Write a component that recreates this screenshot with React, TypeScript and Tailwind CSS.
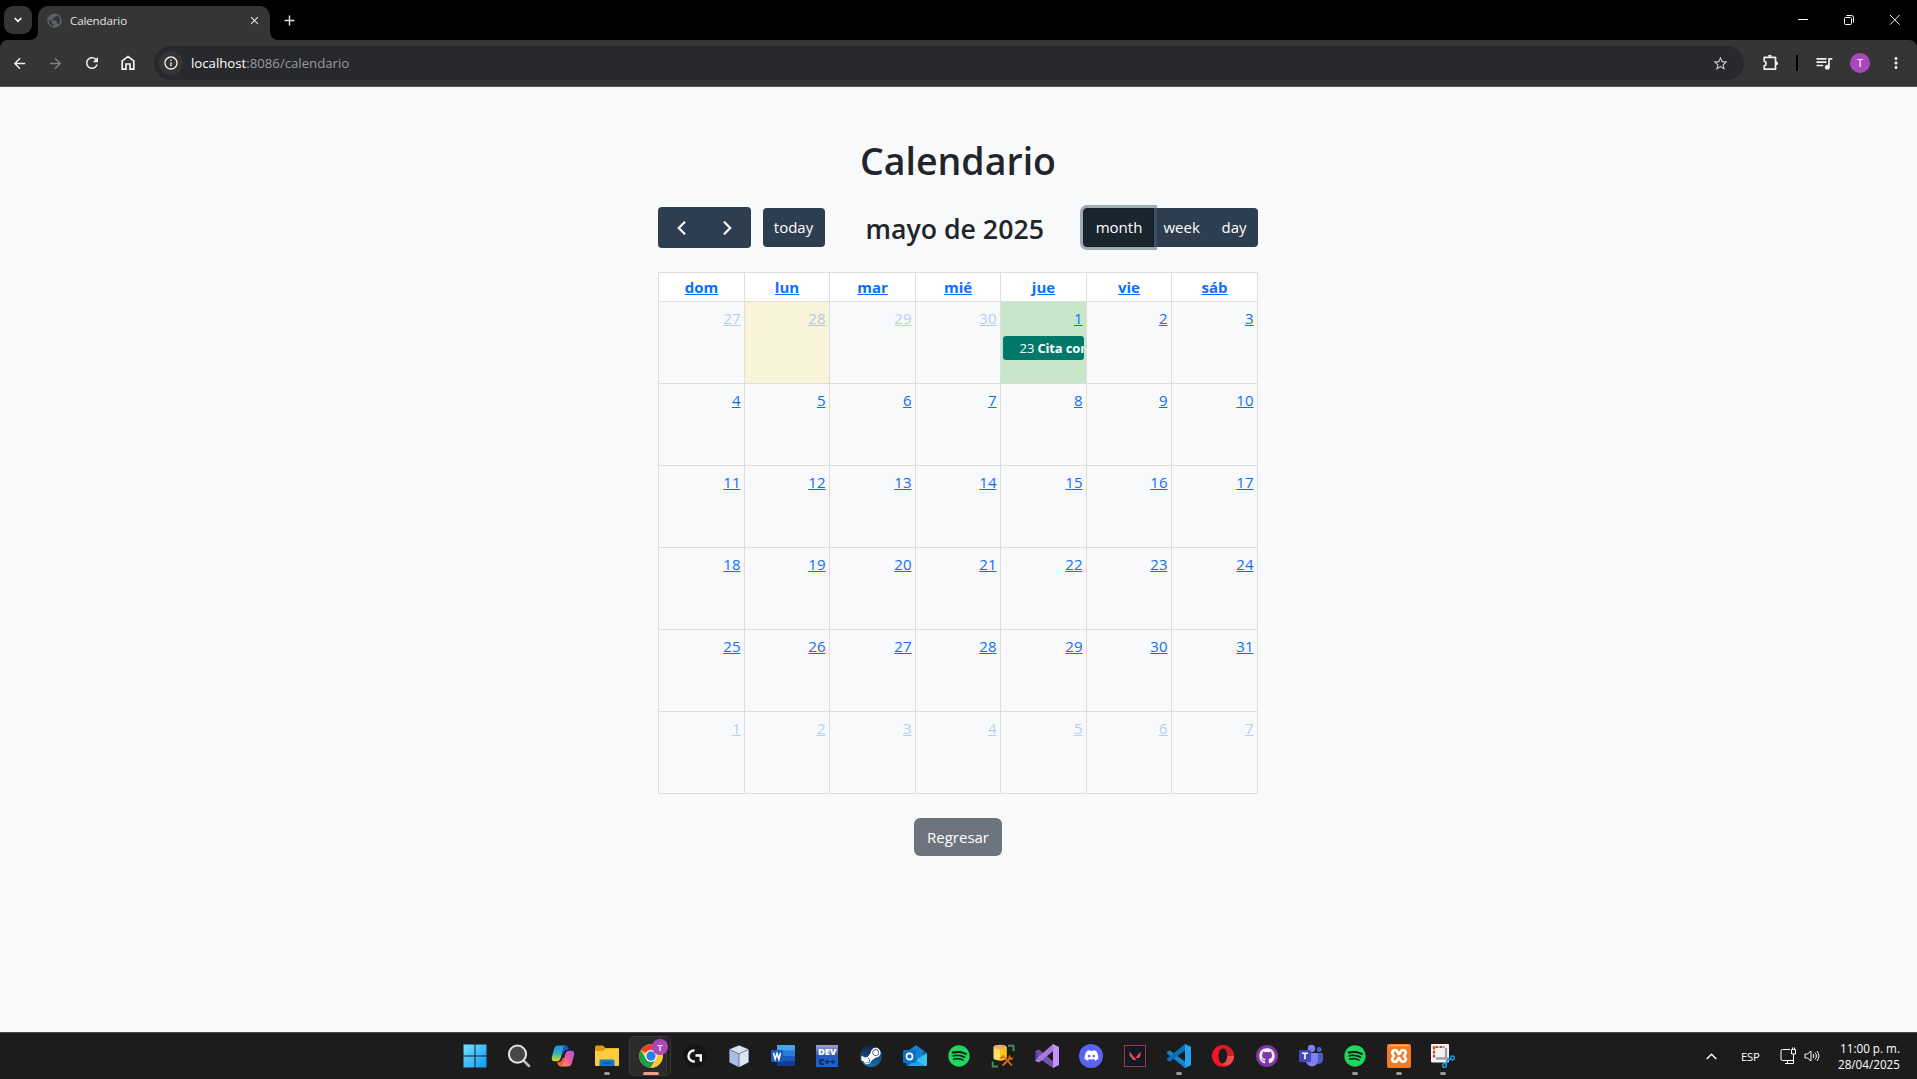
import React from "react";
import { FaSpotify, FaDiscord, FaGithub, FaSteamSymbol } from "react-icons/fa";
import {
  MdArrowBack,
  MdArrowForward,
  MdRefresh,
  MdOutlineInfo,
  MdStarOutline,
  MdQueueMusic,
  MdMoreVert,
  MdPublic,
  MdClose,
  MdAdd,
} from "react-icons/md";

function TabBar() {
  return (
    <div className="flex h-10 items-start bg-black text-[#e3e3e3]">
      <div className="ml-1 mt-1.5 flex h-7 w-7 items-center justify-center rounded-[9px] bg-[#353535]">
        <svg width="8" height="6" viewBox="0 0 8 6" fill="none" stroke="#fff" strokeWidth="1.7">
          <path d="M.7 1 4 4.3 7.3 1" />
        </svg>
      </div>
      <div className="relative ml-1.5 mt-1.5 flex h-[34px] w-[232px] items-center rounded-t-[10px] bg-[#353535]">
        <svg className="absolute -left-2 bottom-0" width="8" height="8" viewBox="0 0 8 8" fill="#353535">
          <path d="M8 0v8H0a8 8 0 0 0 8-8z" />
        </svg>
        <svg className="absolute -right-2 bottom-0" width="8" height="8" viewBox="0 0 8 8" fill="#353535">
          <path d="M0 0v8h8a8 8 0 0 1-8-8z" />
        </svg>
        <MdPublic className="mb-[6px] ml-2 shrink-0 text-[#5f6368]" size={17} />
        <span className="mb-[5px] ml-[7px] text-[11.6px] font-medium leading-4 tracking-[-0.15px] text-[#e3e3e3]">
          Calendario
        </span>
        <MdClose className="mb-1.5 ml-auto mr-[9px]" size={13} />
      </div>
      <MdAdd className="ml-[11px] mt-3" size={17} />
      <div className="ml-auto mr-[17px] mt-[14px] flex items-center text-white">
        <svg width="102" height="13" viewBox="0 0 102 13" fill="none" stroke="currentColor">
          <path d="M0 5.500h10" />
          <rect x="46.500" y="3.500" width="7" height="7" rx="1" />
          <path d="M48.500 1.500h5a2 2 0 0 1 2 2v5" />
          <path d="M92 1l9.600 9.600M101.600 1 92 10.600" />
        </svg>
      </div>
    </div>
  );
}

function AddressBar() {
  return (
    <div className="bg-black">
      <div className="flex h-[47px] items-center rounded-t-lg border-b border-[#5a5a5a] bg-[#353535] text-[#f0f0f0]">
        <MdArrowBack className="ml-[11px]" size={17} />
        <MdArrowForward className="ml-[19px] text-[#808080]" size={17} />
        <MdRefresh className="ml-[19px]" size={18} />
        <svg className="ml-5" width="14" height="16" viewBox="0 0 14 16" fill="none" stroke="currentColor" strokeWidth="1.700">
          <path d="M1.200 5.900 7 1.500l5.800 4.400v8.300H9V9H5v5.200H1.200z" />
        </svg>
        <div className="ml-[19px] flex h-[34px] w-[1590px] items-center rounded-full bg-[#28292c]">
          <div className="ml-[5px] flex h-6 w-6 items-center justify-center rounded-full bg-[#353535]">
            <MdOutlineInfo size={16} />
          </div>
          <span className="ml-2 text-[13.200px] leading-5 text-[#9a9b9d]">
            <span className="text-white">localhost</span>:8086/calendario
          </span>
          <MdStarOutline className="ml-auto mr-[15px] text-[#c4c4c4]" size={17} />
        </div>
        <svg className="ml-[18px]" width="18" height="18" viewBox="0 0 18 18" fill="none">
          <path
            d="M2.200 3.300h11.300v11.900H2.200v-3.400a2.400 2.400 0 0 0 0-4.700z"
            stroke="currentColor"
            strokeWidth="1.700"
            strokeLinejoin="round"
          />
          <path d="M5.800 2.800a2 2 0 0 1 4 0zM14 7.200a2 2 0 0 1 0 4z" fill="currentColor" />
        </svg>
        <div className="ml-[16px] h-4 w-0.5 bg-black" />
        <MdQueueMusic className="ml-[16px]" size={20} />
        <div className="ml-4 flex h-5 w-5 items-center justify-center rounded-full bg-[#ab47bc] text-[10px] font-semibold text-[#f3dff6]">
          T
        </div>
        <MdMoreVert className="ml-[17px]" size={18} />
      </div>
    </div>
  );
}

const weekdays = ["dom", "lun", "mar", "mié", "jue", "vie", "sáb"];
const weeks = [
  [27, 28, 29, 30, 1, 2, 3],
  [4, 5, 6, 7, 8, 9, 10],
  [11, 12, 13, 14, 15, 16, 17],
  [18, 19, 20, 21, 22, 23, 24],
  [25, 26, 27, 28, 29, 30, 31],
  [1, 2, 3, 4, 5, 6, 7],
];
const columns = "grid grid-cols-[86px_85px_86px_85px_86px_85px_86px]";

function Toolbar() {
  return (
    <div className="flex h-[41px] items-center text-[15px] text-white">
      <div className="flex h-[41px] w-[93px] items-center justify-between rounded-[4px] bg-[#2c3e50] px-[19px]">
        <svg width="9" height="14" viewBox="0 0 9 14" fill="none" stroke="#fff" strokeWidth="2.200">
          <path d="M8 .8 1.800 7 8 13.200" />
        </svg>
        <svg width="9" height="14" viewBox="0 0 9 14" fill="none" stroke="#fff" strokeWidth="2.200">
          <path d="M1 .8 7.200 7 1 13.200" />
        </svg>
      </div>
      <div className="ml-3 flex h-[39px] w-[62px] items-center justify-center rounded-[4px] bg-[#2c3e50]">today</div>
      <h2 className="ml-[41px] mt-0.5 w-[178px] whitespace-nowrap text-[26.700px] font-semibold leading-[34px] text-[#212529]">
        mayo de 2025
      </h2>
      <div className="ml-auto flex h-[39px]">
        <div className="z-10 flex w-[71px] items-center justify-center rounded-l-[4px] border border-[#151e27] bg-[#1a252f] pl-0.5 shadow-[0_0_0_3px_rgba(76,91,106,0.5)]">
          month
        </div>
        <div className="relative z-20 -ml-px flex w-[105px] items-center rounded-r-[4px] border-l border-[#151e27]">
          <div className="flex h-full flex-1 items-center rounded-r-[4px] border-l-[3px] border-[#3d4f60] bg-[#2c3e50] pl-[7px]">
            <span>week</span>
            <span className="ml-auto mr-[11px]">day</span>
          </div>
        </div>
      </div>
    </div>
  );
}

function Calendar() {
  return (
    <div className="mt-6 w-[600px] border-l border-t border-[#dcdee0]">
      <div className={columns}>
        {weekdays.map((day) => (
          <div
            key={day}
            className="h-[29px] border-b border-r border-[#dcdee0] bg-white pl-px pt-0.5 text-center text-[15px] font-bold leading-6 text-[#0d6efd] underline"
          >
            {day}
          </div>
        ))}
      </div>
      {weeks.map((week, w) => (
        <div key={w} className={columns}>
          {week.map((day, d) => {
            const outside = (w === 0 && d < 4) || w === 5;
            const today = w === 0 && d === 1;
            const busy = w === 0 && d === 4;
            return (
              <div
                key={d}
                className={
                  "h-[82px] border-b border-r border-[#dcdee0] " +
                  (today ? "bg-[#f9f3da]" : busy ? "bg-[#c8e6c9]" : "")
                }
              >
                <div
                  className={
                    "pl-1 pr-[3px] pt-1 text-right text-[15px] leading-6 text-[#0d6efd] underline " +
                    (outside ? "opacity-30" : "")
                  }
                >
                  {day}
                </div>
                {busy && (
                  <div className="ml-0.5 mr-0.5 mt-1.5 flex h-6 items-center overflow-hidden whitespace-nowrap rounded-[3px] bg-[#00796b] pl-[17px] pt-0.5 text-[13px] text-white">
                    <span>23</span>
                    <span className="ml-[3px] font-bold tracking-[-0.15px]">Cita con</span>
                  </div>
                )}
              </div>
            );
          })}
        </div>
      ))}
    </div>
  );
}

function Svg({ children, size = 24 }: { children: React.ReactNode; size?: number }) {
  return (
    <svg width={size} height={size} viewBox="0 0 24 24" fill="none">
      {children}
    </svg>
  );
}

function SpotifyIcon() {
  return (
    <div className="flex h-[22px] w-[22px] items-center justify-center rounded-full bg-[#0f1a12]">
      <FaSpotify size={22} color="#1ed760" />
    </div>
  );
}

const icons: { name: string; open?: boolean; node: React.ReactNode }[] = [
  {
    name: "start",
    node: (
      <Svg>
        <defs>
          <linearGradient id="win" x1="0" y1="0" x2="1" y2="1" gradientUnits="objectBoundingBox">
            <stop stopColor="#6fe4ff" />
            <stop offset="1" stopColor="#1296f5" />
          </linearGradient>
        </defs>
        <path d="M.5 .5h11v11H.5zM12.500 .5h11v11h-11zM.5 12.500h11v11H.5zM12.500 12.500h11v11h-11z" fill="url(#win)" />
      </Svg>
    ),
  },
  {
    name: "search",
    node: (
      <Svg>
        <path d="M16.500 16.500 22 22" stroke="#b9b9b9" strokeWidth="2.600" strokeLinecap="round" />
        <circle cx="10.500" cy="10.200" r="8.600" fill="#474747" stroke="#e4e4e4" strokeWidth="2" />
      </Svg>
    ),
  },
  {
    name: "copilot",
    node: (
      <Svg>
        <defs>
          <linearGradient id="copL" x1="0" y1="0" x2="0" y2="1">
            <stop stopColor="#1f8df0" />
            <stop offset=".5" stopColor="#2fb6b0" />
            <stop offset="1" stopColor="#e8d61c" />
          </linearGradient>
          <linearGradient id="copR" x1="1" y1="0" x2="0" y2="1">
            <stop stopColor="#a050f0" />
            <stop offset=".5" stopColor="#ee5896" />
            <stop offset="1" stopColor="#ffa04c" />
          </linearGradient>
        </defs>
        <path d="M7 1.500h8c-1.500 0-2.200 1.500-2.700 3.200L9.800 14c-.9 2.500-2 3.300-4 3.300H4C1 17.300.3 15.500 1 12.500l2-7C3.700 2.800 5 1.500 7 1.500z" fill="url(#copL)" />
        <path d="M12 1.500h2.500c1.500 0 2.300 1 2.800 2.500l.5 1.800c-3 0-4.200.7-5 3L12 10.500l-1.200-1 1.400-4.800c.4-1.400 1-2.200 1.800-2.700z" fill="#1852c4" />
        <path d="M17 22.500H9c1.500 0 2.200-1.500 2.700-3.200L14.200 10c.9-2.500 2-3.300 4-3.300H20c3 0 3.700 1.800 3 4.800l-2 7c-.7 2.700-2 4-4 4z" fill="url(#copR)" />
        <path d="M12 22.500H9.500c-1.500 0-2.300-1-2.800-2.500l-.5-1.800c3 0 4.200-.7 5-3l.8-1.700 1.200 1-1.400 4.800c-.4 1.400-1 2.200-1.800 2.700z" fill="#f0663c" />
      </Svg>
    ),
  },
  {
    name: "explorer",
    open: true,
    node: (
      <Svg>
        <path d="M0 3a1.500 1.500 0 0 1 1.500-1.500H8l2.500 2.500H23a1 1 0 0 1 1 1v5H0z" fill="#dc9a10" />
        <path d="M0 7h8l2.500-2.500H23a1 1 0 0 1 1 1V21a1 1 0 0 1-1 1H1a1 1 0 0 1-1-1z" fill="#fdcb3e" />
        <path d="M4.500 22v-5a1.500 1.500 0 0 1 1.500-1.500h12a1.500 1.500 0 0 1 1.500 1.500v5z" fill="#1377cf" />
        <path d="M8 19h8" stroke="#0b4f94" strokeWidth="1.300" />
      </Svg>
    ),
  },
  {
    name: "chrome",
    node: (
      <Svg>
        <circle cx="12" cy="12" r="11.800" fill="#fcc934" />
        <path d="M12 12 1.800 6.100A11.800 11.800 0 0 1 22.200 6.100z" fill="#ea4335" />
        <path d="M1.800 6.100a11.800 11.800 0 0 0 9.700 17.700L17.100 15 12 12 6.900 15z" fill="#1e9e4b" />
        <path d="M12 6.500h10.400A11.800 11.800 0 0 1 11.500 23.800L17 15z" fill="#fcc934" />
        <circle cx="12" cy="12" r="5.900" fill="#fff" />
        <circle cx="12" cy="12" r="4.700" fill="#2b7de9" />
      </Svg>
    ),
  },
  {
    name: "ghub",
    node: (
      <Svg>
        <circle cx="12" cy="12" r="11.700" fill="#151515" />
        <path d="M11.500 6.500h-.5a5.500 5.500 0 0 0 0 11h.8" stroke="#fff" strokeWidth="2.400" />
        <path d="M12.500 11.500h5.300v6" stroke="#fff" strokeWidth="2.400" />
      </Svg>
    ),
  },
  {
    name: "virtualbox",
    node: (
      <Svg>
        <path d="M12 .8 22 5v13.500L12 23.500 2 18.500V5z" fill="#36387c" />
        <path d="M12 1.500 21.300 5.300 12 9.500 2.700 5.300z" fill="#d3e6e6" />
        <path d="M2.500 5.800 11.700 10v13L2.500 18.200z" fill="#a9bfe2" />
        <path d="M21.500 5.800 12.300 10v13l9.200-4.800z" fill="#dde5f0" />
      </Svg>
    ),
  },
  {
    name: "word",
    node: (
      <Svg>
        <path d="M6 1h17a1 1 0 0 1 1 1v5H6z" fill="#41a5ee" />
        <path d="M6 6.500h18V12H6z" fill="#2b7cd3" />
        <path d="M6 12h18v5.500H6z" fill="#185abd" />
        <path d="M6 17.500h18V21a1 1 0 0 1-1 1H6z" fill="#103f91" />
        <rect y="6" width="12" height="12" rx="1" fill="#185abd" />
        <path d="m2.500 8.800 1.600 6.500L6 9.500l1.900 5.800 1.600-6.500" stroke="#fff" strokeWidth="1.500" />
      </Svg>
    ),
  },
  {
    name: "devcpp",
    node: (
      <div className="flex h-[22px] w-[22px] flex-col items-center overflow-hidden bg-linear-to-b from-[#a49fc4] via-[#2458b8] to-[#1268dc] text-[9.500px] font-extrabold leading-[11px]">
        <span className="h-[11px] pt-px tracking-[-0.300px] text-white">DEV</span>
        <span className="h-[11px] tracking-[-0.200px] text-[#0b2460]">C++</span>
      </div>
    ),
  },
  {
    name: "steam",
    node: (
      <div className="flex h-[22px] w-[22px] items-center justify-center overflow-hidden rounded-full bg-linear-to-b from-[#111d42] to-[#1475ad]">
        <FaSteamSymbol size={22} color="#fff" />
      </div>
    ),
  },
  {
    name: "outlook",
    node: (
      <Svg>
        <path d="M3 8.500 13 1l10.500 7.500V21a1 1 0 0 1-1 1H4a1 1 0 0 1-1-1z" fill="#0f62ae" />
        <path d="M6 6.500 13 1.500l7 5V15H6z" fill="#1681d0" />
        <path d="m24 9-9.500 6L10 22h13a1 1 0 0 0 1-1z" fill="#32c4f2" />
        <path d="M5 22h17L12 15z" fill="#1ba7e5" />
        <rect y="6" width="13" height="13" rx="1" fill="#0f6fc6" />
        <ellipse cx="6.500" cy="12.500" rx="3" ry="3.200" stroke="#fff" strokeWidth="1.700" />
      </Svg>
    ),
  },
  { name: "spotify", node: <SpotifyIcon /> },
  {
    name: "ssms",
    node: (
      <Svg>
        <path d="M17 1.700h5.500V7M1.700 17.500v5H7" stroke="#3f9445" strokeWidth="2" />
        <path d="M2.500 3v11c0 1.500 3 2.500 6.500 2.500s6.500-1 6.500-2.500V3z" fill="#fde062" />
        <path d="M9 3h6.500v11c0 1.500-3 2.500-6.500 2.500z" fill="#fcc90f" />
        <ellipse cx="9" cy="3" rx="6.500" ry="2.300" fill="#f4aa6f" />
        <path d="m12.500 12.500 8.500 9M20 13.500l-8.500 8" stroke="#df6a12" strokeWidth="1.800" />
        <path d="M9.500 14.500 13 11.300M18.500 11.500v3.200h3.500" stroke="#df6a12" strokeWidth="1.800" />
      </Svg>
    ),
  },
  {
    name: "visual-studio",
    node: (
      <Svg>
        <path d="M0 7.300 4 5.500l14 11.700V24L4.500 14.800 2.300 16.500V18L0 16.700z" fill="#7450b3" />
        <path d="M0 16.700V16L18 0v7.200L4 18.500z" fill="#a77ae0" />
        <path d="M0 7.300v9.400L2.300 15V9z" fill="#54358c" />
        <path d="m18 0 6 3v18l-6 3z" fill="#c792f5" />
      </Svg>
    ),
  },
  {
    name: "discord",
    node: (
      <div className="flex h-6 w-6 items-center justify-center rounded-full bg-[#5865f2]">
        <FaDiscord size={15} color="#fff" />
      </div>
    ),
  },
  {
    name: "valorant",
    node: (
      <Svg>
        <rect x="1.500" y="1.500" width="21" height="21" fill="#111a24" stroke="#9c3942" />
        <path d="m6.500 7.500 7 8.500h-3.400l-3.600-4.500zM17.500 7.500V12l-1.800 2h-3.200z" fill="#f4434f" />
      </Svg>
    ),
  },
  {
    name: "vscode",
    open: true,
    node: (
      <Svg>
        <path d="M0 8.300 2.500 6.200 18 17.500V24L0 9.500z" fill="#1684cb" />
        <path d="M0 15.700 2.500 17.800 18 6.500V0L0 14.500z" fill="#0b70b5" />
        <path d="m18 0 6 2.800v18.400L18 24z" fill="#27a3ee" />
      </Svg>
    ),
  },
  {
    name: "opera",
    node: (
      <Svg>
        <path d="M12 1a11 11 0 1 0 0 22 11 11 0 0 0 0-22zm0 3.200c2.800 0 4.500 3.500 4.500 7.800s-1.700 7.800-4.500 7.800S7.500 16.300 7.500 12 9.200 4.200 12 4.200z" fill="#f5122b" fillRule="evenodd" />
        <path d="M9 4.800A11 11 0 0 1 19.400 3.900 11 11 0 0 1 19.400 20.100 11 11 0 0 1 9 19.200c1 .6 2 .8 3 .6 2.800 0 4.500-3.500 4.500-7.800S14.800 4.200 12 4.200c-1 0-2 .2-3 .6z" fill="#c7202a" />
        <path d="M16.500 12H23a11 11 0 0 1-3.600 8.100A11 11 0 0 1 9 19.200c4.500 2 7-3 7.500-7.200z" fill="#f24a4b" />
      </Svg>
    ),
  },
  {
    name: "github",
    node: (
      <div className="flex h-[22px] w-[22px] items-center justify-center rounded-full bg-[#8235a5]">
        <FaGithub size={16} color="#f5f0f8" />
      </div>
    ),
  },
  {
    name: "teams",
    node: (
      <Svg>
        <circle cx="12.500" cy="4.500" r="3.700" fill="#7b83eb" />
        <circle cx="20.200" cy="5.500" r="2.500" fill="#5059c9" />
        <path d="M16 9h7a1 1 0 0 1 1 1v6a4 4 0 0 1-7 2.500z" fill="#5059c9" />
        <path d="M7 9h11a1 1 0 0 1 1 1v6.500a6 6 0 0 1-12 0z" fill="#7b83eb" />
        <rect y="6" width="12" height="12" rx="1" fill="#4149b8" />
        <path d="M3 9.300h6M6 9.300v6" stroke="#fff" strokeWidth="1.600" />
      </Svg>
    ),
  },
  { name: "spotify-running", open: true, node: <SpotifyIcon /> },
  {
    name: "xampp",
    open: true,
    node: (
      <Svg>
        <rect width="24" height="24" rx="2" fill="#ee7c28" />
        <path d="M2.500 1.500h19" stroke="#f8b078" strokeWidth="1.500" />
        <path
          d="M8 6.200c-2.500 0-3.500 2.300-2.300 4L7 12l-1.300 1.800c-1.200 1.700-.2 4 2.300 4 3.500 0 2-4 4-4s.5 4 4 4c2.500 0 3.500-2.300 2.300-4L17 12l1.300-1.800c1.200-1.700.2-4-2.300-4-3.500 0-2 4-4 4s-.5-4-4-4z"
          stroke="#fff"
          strokeWidth="2.700"
          strokeLinejoin="round"
        />
      </Svg>
    ),
  },
  {
    name: "snipping-tool",
    open: true,
    node: (
      <Svg>
        <rect x="0" y="0" width="18" height="18.500" rx="1" fill="#f2f2f2" />
        <path d="M3 13.500V3h10.500" stroke="#d34115" strokeWidth="2.200" strokeDasharray="2.800 1.200" />
        <path d="M15 4v11.500M5 14.500h13" stroke="#9ca1a6" strokeWidth="2.300" />
        <circle cx="21.500" cy="14" r="1.900" stroke="#1e98e0" strokeWidth="1.500" />
        <circle cx="13.500" cy="21.500" r="1.900" stroke="#1e98e0" strokeWidth="1.500" />
        <path d="m15 20 2-5M20 15l-5 2" stroke="#1e98e0" strokeWidth="1.500" />
      </Svg>
    ),
  },
];

function Taskbar() {
  return (
    <div className="flex h-[47px] border-t border-[#484848] bg-[#1c1c1c] text-white">
      <div className="ml-[453px] flex">
        {icons.map((icon) => (
          <div key={icon.name} className="relative flex h-full w-11 items-center justify-center pb-px">
            {icon.name === "chrome" && (
              <>
                <div className="absolute left-[5px] top-[3px] h-10 w-[37px] rounded-[5px] border border-[#383838] bg-[#222]" />
                <div className="absolute left-0 top-[3px] h-10 w-[38px] rounded-[5px] border border-[#383838] bg-[#2b2b2b]" />
              </>
            )}
            <div className="relative">{icon.node}</div>
            {icon.name === "chrome" && (
              <>
                <div className="absolute left-[23px] top-[6px] flex h-4 w-4 items-center justify-center rounded-full bg-[#ab47bc] text-[9px] font-semibold leading-none">
                  T
                </div>
                <div className="absolute bottom-1 left-3.5 h-[3px] w-4 rounded-full bg-[#ec9c90]" />
              </>
            )}
            {icon.open && <div className="absolute bottom-1 left-[19px] h-[3px] w-1.5 rounded-full bg-[#9a9a9a]" />}
          </div>
        ))}
      </div>
      <div className="ml-auto flex items-center pr-[17px]">
        <svg width="11" height="7" viewBox="0 0 11 7" fill="none" stroke="#fff" strokeWidth="1.400">
          <path d="M.7 6 5.500 1.200 10.300 6" />
        </svg>
        <span className="ml-6 mt-0.5 w-5 text-[11.300px] tracking-[-0.200px]">ESP</span>
        <svg className="ml-[19px]" width="17" height="18" viewBox="0 0 17 18" fill="none" stroke="#fff">
          <path d="M10 2.500H2.500a1.500 1.500 0 0 0-1.500 1.500v8a1.500 1.500 0 0 0 1.500 1.500H13M5 16.500h8M7.500 13.500v3" />
          <path d="M11.500 2.500h4v4.500h-4zM12.500 2.500v-2M14.500 2.500v-2M13.500 7v9.500" />
        </svg>
        <svg className="ml-[7px]" width="17" height="14" viewBox="0 0 17 14" fill="none" stroke="#fff">
          <path d="M1 5v4h2.500l3.500 3V2L3.500 5z" />
          <path d="M9 5a3 3 0 0 1 0 4M11 3.500a5 5 0 0 1 0 7M13 2a7.500 7.500 0 0 1 0 10" />
        </svg>
        <div className="ml-[13px] flex w-[66px] flex-col items-end whitespace-nowrap text-[11.700px] leading-4">
          <div>11:00 p. m.</div>
          <div>28/04/2025</div>
        </div>
      </div>
    </div>
  );
}

export default function App() {
  return (
    <div className="flex h-[1079px] w-[1917px] flex-col overflow-hidden bg-[#f8f9fb] font-['Open_Sans','Noto_Sans',sans-serif]">
      <TabBar />
      <AddressBar />
      <main className="flex flex-1 flex-col items-center pr-0.5">
        <h1 className="mt-[50px] pl-px text-[37.500px] font-semibold leading-12 text-[#212529]">Calendario</h1>
        <div className="mt-[22px] w-[600px]">
          <Toolbar />
          <Calendar />
        </div>
        <div className="mt-6 flex h-[38px] w-[88px] items-center justify-center rounded-md bg-[#6c757d] pl-px text-[15px] text-white">
          Regresar
        </div>
      </main>
      <Taskbar />
    </div>
  );
}
